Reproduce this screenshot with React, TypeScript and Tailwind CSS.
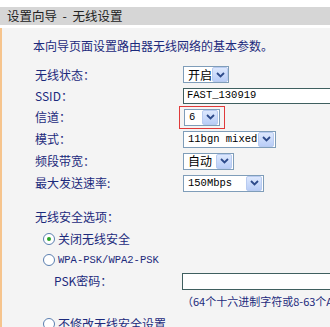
import React from "react";

const cjk = { fontFamily: '"Noto Sans CJK SC", "Liberation Sans", sans-serif' };
const mono = { fontFamily: '"Liberation Mono", "Noto Sans CJK SC", monospace' };

function Chevron() {
  return (
    <span className="flex h-[15px] w-[16px] shrink-0 items-center justify-center rounded-[2px] border border-[#b8cbf0] bg-gradient-to-b from-[#dde8fd] to-[#b9cdf7]">
      <svg width="9" height="6" viewBox="0 0 9 6">
        <path d="M1 1 L4.5 4.5 L8 1" fill="none" stroke="#2d4a8a" strokeWidth="1.8" />
      </svg>
    </span>
  );
}

function Select({ text, w, isMono }: { text: string; w: string; isMono?: boolean }) {
  return (
    <div className={`flex h-[17px] ${w} shrink-0 items-center justify-between border border-[#7f9db9] bg-white pl-[4px] pr-[1px]`}>
      <span
        className={`whitespace-nowrap leading-none text-black ${isMono ? "text-[10.5px]" : "text-[12px]"}`}
        style={isMono ? mono : cjk}
      >
        {text}
      </span>
      <Chevron />
    </div>
  );
}

function Label({ children }: { children: React.ReactNode }) {
  return (
    <div className="w-[148px] shrink-0 text-[12px] leading-none text-[#1c2a7c]" style={cjk}>
      {children}
    </div>
  );
}

function Radio({ checked }: { checked?: boolean }) {
  return (
    <span className="flex h-[12px] w-[12px] shrink-0 items-center justify-center rounded-full border border-[#5b7fb0] bg-white">
      {checked && <span className="h-[4px] w-[4px] rounded-full bg-[#27a327]" />}
    </span>
  );
}

export default function App() {
  return (
    <div className="h-[327px] w-[330px] overflow-hidden bg-white">
      <div className="mt-[7px] flex h-[18px] items-center bg-[#d6d6d6] pl-[7px] text-[12.5px] text-[#222]" style={cjk}>
        设置向导 &nbsp;- &nbsp;无线设置
      </div>
      <div className="mt-[3px] h-[400px] border-l-[2px] border-[#f6c48d] bg-[#f4f4f4] pl-[31px]">
        <div className="pt-[12px] text-[12px] leading-none text-[#1c2a7c]" style={cjk}>
          本向导页面设置路由器无线网络的基本参数。
        </div>
        <div className="mt-[12px] flex flex-col pl-[2px]">
          <div className="flex h-[21px] items-center">
            <Label>无线状态：</Label>
            <Select text="开启" w="w-[46px]" />
          </div>
          <div className="flex h-[21px] items-center">
            <Label>SSID：</Label>
            <div className="flex h-[16px] w-[200px] shrink-0 items-center border border-[#3f5f5f] bg-white pl-[3px]">
              <span className="text-[10.5px] leading-none text-black" style={mono}>FAST_130919</span>
            </div>
          </div>
          <div className="flex h-[22px] items-center">
            <Label>信道：</Label>
            <div className="-ml-[4px] flex h-[23px] w-[46px] shrink-0 items-center border border-[#e03a3a] pl-[4px]">
              <Select text="6" w="w-[36px]" isMono />
            </div>
          </div>
          <div className="flex h-[22px] items-center">
            <Label>模式：</Label>
            <Select text="11bgn mixed" w="w-[93px]" isMono />
          </div>
          <div className="flex h-[22px] items-center">
            <Label>频段带宽：</Label>
            <Select text="自动" w="w-[51px]" />
          </div>
          <div className="flex h-[22px] items-center">
            <Label>最大发送速率:</Label>
            <Select text="150Mbps" w="w-[81px]" isMono />
          </div>
        </div>
        <div className="mt-[17px] pl-[2px] text-[12px] leading-none text-[#1c2a7c]" style={cjk}>
          无线安全选项：
        </div>
        <div className="mt-[5px] flex flex-col pl-[10px]">
          <div className="flex h-[22px] items-center gap-[3px]">
            <Radio checked />
            <span className="text-[12px] leading-none text-[#1c2a7c]" style={cjk}>关闭无线安全</span>
          </div>
          <div className="flex h-[20px] items-center gap-[3px]">
            <Radio />
            <span className="text-[10.5px] leading-none text-[#1c2a7c]" style={mono}>WPA-PSK/WPA2-PSK</span>
          </div>
          <div className="flex h-[22px] items-center">
            <div className="w-[139px] shrink-0 pl-[11px] text-[12px] leading-none text-[#1c2a7c]" style={cjk}>
              PSK密码：
            </div>
            <div className="h-[17px] w-[200px] shrink-0 border border-[#3f5f5f] bg-white" />
          </div>
          <div className="flex h-[18px] items-center pl-[139px]">
            <span className="whitespace-nowrap text-[11px] leading-none text-[#1c2a7c]" style={cjk}>
              （64个十六进制字符或8-63个ASCII码字符）
            </span>
          </div>
          <div className="mt-[3px] flex h-[22px] items-center gap-[3px]">
            <Radio />
            <span className="text-[12px] leading-none text-[#1c2a7c]" style={cjk}>不修改无线安全设置</span>
          </div>
        </div>
      </div>
    </div>
  );
}
